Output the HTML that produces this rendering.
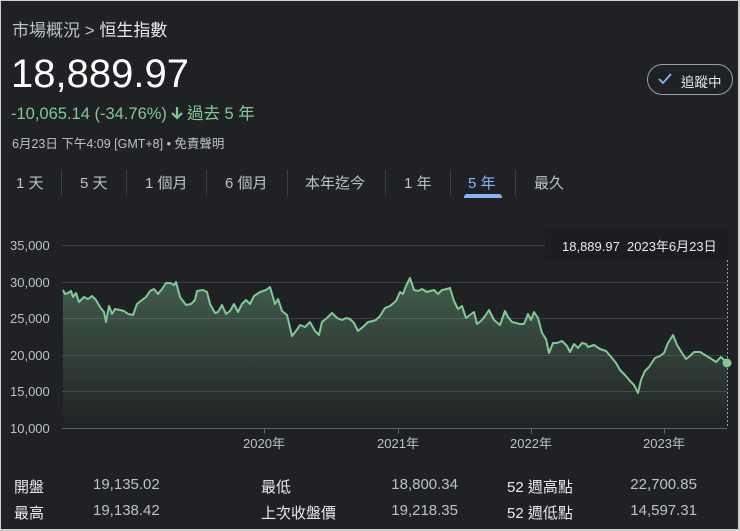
<!DOCTYPE html>
<html><head><meta charset="utf-8"><style>
*{margin:0;padding:0;box-sizing:border-box}
body{width:740px;height:531px;background:#202124;font-family:"Liberation Sans","Noto Sans CJK TC",sans-serif;color:#bdc1c6;position:relative;overflow:hidden}
.frame{position:absolute;left:0;top:0;width:740px;height:531px;border:1px solid #cfcfcf;border-right-width:2px;border-bottom-width:2px}
.a{position:absolute;white-space:nowrap}
.tab{position:absolute;top:172px;font-size:15px;color:#bdc1c6}
.sep{position:absolute;top:170px;width:1px;height:26px;background:#3c4043}
.lab{font-size:15px;color:#e8eaed}
.val{font-size:15px;color:#bdc1c6}
</style></head><body>
<div class="a" style="left:12px;top:16px;font-size:17px;color:#bdc1c6">市場概況 &gt; <span style="color:#e8eaed">恒生指數</span></div>
<div class="a" style="left:11px;top:52px;font-size:40px;color:#fff;letter-spacing:0">18,889.97</div>
<div class="a" style="left:11px;top:100px;font-size:16.5px;color:#81c995">-10,065.14 (-34.76%)<svg width="14" height="16" viewBox="0 0 14 16" style="vertical-align:-2px;margin:0 3px"><path d="M7 2v11M2 8l5 5 5-5" stroke="#81c995" stroke-width="2.2" fill="none"/></svg>過去 5 年</div>
<div class="a" style="left:12px;top:133px;font-size:12.5px;color:#bdc1c6">6月23日 下午4:09 [GMT+8] • 免責聲明</div>
<div class="a" style="left:647px;top:64px;width:86px;height:31px;border:1px solid #9aa0a6;border-radius:16px"></div>
<svg class="a" style="left:657px;top:72px" width="16" height="14" viewBox="0 0 16 14"><path d="M2 7l4 4 8-9" stroke="#8ab4f8" stroke-width="1.8" fill="none"/></svg>
<div class="a" style="left:681px;top:71px;font-size:13.5px;color:#e8eaed">追蹤中</div>

<div class="tab" style="left:16px">1 天</div>
<div class="sep" style="left:61px"></div>
<div class="tab" style="left:80px">5 天</div>
<div class="sep" style="left:126px"></div>
<div class="tab" style="left:145px">1 個月</div>
<div class="sep" style="left:206px"></div>
<div class="tab" style="left:225px">6 個月</div>
<div class="sep" style="left:287px"></div>
<div class="tab" style="left:305px">本年迄今</div>
<div class="sep" style="left:385px"></div>
<div class="tab" style="left:404px">1 年</div>
<div class="sep" style="left:450px"></div>
<div class="tab" style="left:468px;color:#8ab4f8">5 年</div>
<div class="a" style="left:464px;top:194px;width:38px;height:4px;background:#8ab4f8;border-radius:3px 3px 0 0"></div>
<div class="sep" style="left:515px"></div>
<div class="tab" style="left:534px">最久</div>

<svg class="a" style="left:0;top:0" width="740" height="531">
<defs><linearGradient id="g" gradientUnits="userSpaceOnUse" x1="0" y1="280" x2="0" y2="430"><stop offset="0" stop-color="#81c995" stop-opacity="0.35"/><stop offset="1" stop-color="#81c995" stop-opacity="0"/></linearGradient></defs>
<g stroke="#3c4043" stroke-width="1">
<line x1="62" y1="245.5" x2="727" y2="245.5"/>
<line x1="62" y1="282.5" x2="727" y2="282.5"/>
<line x1="62" y1="318.5" x2="727" y2="318.5"/>
<line x1="62" y1="355.5" x2="727" y2="355.5"/>
<line x1="62" y1="391.5" x2="727" y2="391.5"/>
<line x1="62" y1="428.5" x2="727" y2="428.5" stroke="#5f6368"/>
<line x1="264.5" y1="428" x2="264.5" y2="434" stroke="#5f6368"/>
<line x1="398.5" y1="428" x2="398.5" y2="434" stroke="#5f6368"/>
<line x1="531.5" y1="428" x2="531.5" y2="434" stroke="#5f6368"/>
<line x1="664.5" y1="428" x2="664.5" y2="434" stroke="#5f6368"/>
</g>
<rect x="545" y="230" width="184" height="30" fill="#1c1d20"/>
<line x1="727.5" y1="260" x2="727.5" y2="428" stroke="#9aa0a6" stroke-dasharray="2,2"/>
<polygon fill="url(#g)" points="63,430 63,290 65,294 68,293 71,291 73,297 76,293 79,302 84,297 88,299 92,296 96,300 100,307 104,312 106,322 109,306 112,314 115,309 120,310 124,311 128,314 133,315 137,304 142,300 146,297 150,291 154,289 158,294 162,289 166,283 170,283 174,285 176,282 180,297 186,305 191,304 195,300 197,291 203,290 207,292 210,304 215,313 218,312 222,305 226,314 230,311 234,304 238,312 242,304 246,300 250,304 254,296 260,292 266,290 270,287 275,304 278,299 282,311 287,315 292,336 296,331 300,325 305,327 310,322 315,331 319,335 322,322 327,318 332,313 337,318 342,320 346,318 350,319 354,323 358,331 364,326 368,322 373,321 376,320 380,316 385,308 390,306 396,301 400,292 403,294 406,286 410,278 414,290 418,291 422,289 427,292 430,291 434,290 438,294 442,290 447,289 450,288 454,301 458,309 462,306 466,318 470,315 474,312 477,324 481,321 485,316 489,310 494,320 500,325 505,311 508,317 512,322 516,323 520,324 524,324 528,314 531,320 534,312 538,318 542,333 546,339 549,353 553,343 557,343 562,341 567,346 570,352 574,344 578,348 582,343 586,344 588,347 594,345 600,349 606,351 612,358 616,363 620,370 625,375 630,381 634,385 638,393 641,380 645,371 649,367 655,358 660,356 664,353 668,343 673,335 677,345 682,353 686,359 690,356 694,352 700,352 705,355 710,358 716,362 721,357 727,363 727,430"/>
<polyline fill="none" stroke="#81c995" stroke-width="2" stroke-linejoin="round" points="63,290 65,294 68,293 71,291 73,297 76,293 79,302 84,297 88,299 92,296 96,300 100,307 104,312 106,322 109,306 112,314 115,309 120,310 124,311 128,314 133,315 137,304 142,300 146,297 150,291 154,289 158,294 162,289 166,283 170,283 174,285 176,282 180,297 186,305 191,304 195,300 197,291 203,290 207,292 210,304 215,313 218,312 222,305 226,314 230,311 234,304 238,312 242,304 246,300 250,304 254,296 260,292 266,290 270,287 275,304 278,299 282,311 287,315 292,336 296,331 300,325 305,327 310,322 315,331 319,335 322,322 327,318 332,313 337,318 342,320 346,318 350,319 354,323 358,331 364,326 368,322 373,321 376,320 380,316 385,308 390,306 396,301 400,292 403,294 406,286 410,278 414,290 418,291 422,289 427,292 430,291 434,290 438,294 442,290 447,289 450,288 454,301 458,309 462,306 466,318 470,315 474,312 477,324 481,321 485,316 489,310 494,320 500,325 505,311 508,317 512,322 516,323 520,324 524,324 528,314 531,320 534,312 538,318 542,333 546,339 549,353 553,343 557,343 562,341 567,346 570,352 574,344 578,348 582,343 586,344 588,347 594,345 600,349 606,351 612,358 616,363 620,370 625,375 630,381 634,385 638,393 641,380 645,371 649,367 655,358 660,356 664,353 668,343 673,335 677,345 682,353 686,359 690,356 694,352 700,352 705,355 710,358 716,362 721,357 727,363"/>
<circle cx="727" cy="363" r="4.5" fill="#81c995"/>
<g font-family="Liberation Sans,Noto Sans CJK TC,sans-serif" font-size="13" fill="#bdc1c6">
<text x="10" y="250">35,000</text>
<text x="10" y="287">30,000</text>
<text x="10" y="323">25,000</text>
<text x="10" y="360">20,000</text>
<text x="10" y="396">15,000</text>
<text x="10" y="433">10,000</text>
<text x="264" y="448" text-anchor="middle">2020年</text>
<text x="398" y="448" text-anchor="middle">2021年</text>
<text x="531" y="448" text-anchor="middle">2022年</text>
<text x="664" y="448" text-anchor="middle">2023年</text>
<text x="562" y="251" fill="#e8eaed">18,889.97</text>
<text x="627" y="251" fill="#e8eaed">2023年6月23日</text>
</g>
</svg>

<div class="a lab" style="left:14px;top:476px">開盤</div>
<div class="a val" style="left:93px;top:476px">19,135.02</div>
<div class="a lab" style="left:14px;top:502px">最高</div>
<div class="a val" style="left:93px;top:502px">19,138.42</div>
<div class="a lab" style="left:261px;top:476px">最低</div>
<div class="a val" style="right:282px;top:476px">18,800.34</div>
<div class="a lab" style="left:261px;top:502px">上次收盤價</div>
<div class="a val" style="right:282px;top:502px">19,218.35</div>
<div class="a lab" style="left:507px;top:476px">52 週高點</div>
<div class="a val" style="right:43px;top:476px">22,700.85</div>
<div class="a lab" style="left:507px;top:502px">52 週低點</div>
<div class="a val" style="right:43px;top:502px">14,597.31</div>
<div class="frame"></div>
</body></html>
